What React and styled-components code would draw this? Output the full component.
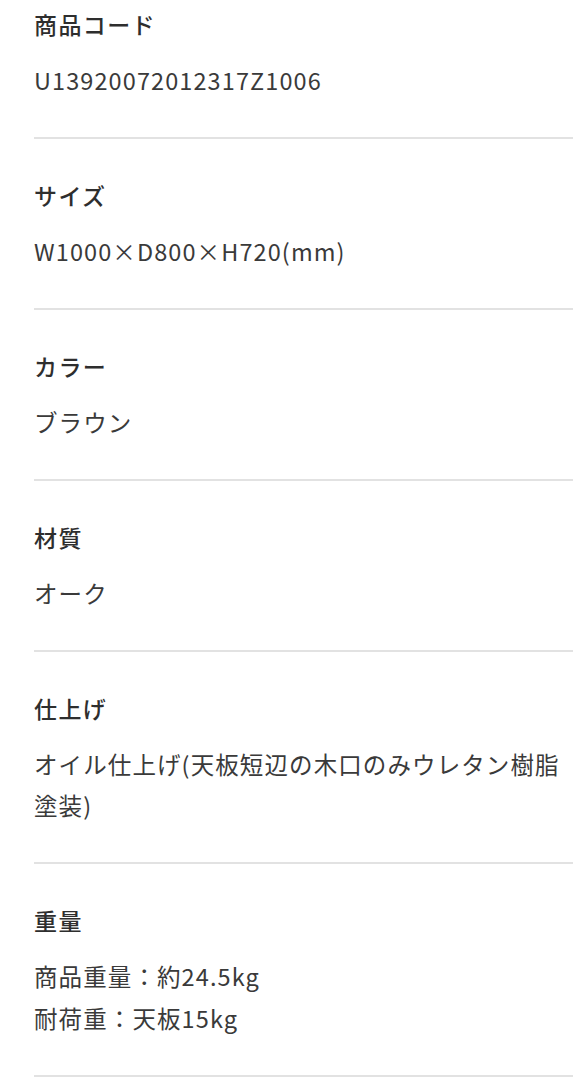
import React from "react";
import styled, { createGlobalStyle } from "styled-components";

const Global = createGlobalStyle`
  html, body { margin: 0; padding: 0; background: #fff; }
  body {
    font-family: "Noto Sans CJK JP", "Noto Sans", sans-serif;
    color: #333;
    -webkit-font-smoothing: antialiased;
  }
`;

const List = styled.dl`
  margin: 0 0 0 34px;
  padding: 0;
`;

const Item = styled.div`
  display: flex;
  flex-direction: column;
  gap: 14px;
  padding: 35px 0 36px;
  border-bottom: 2px solid #e2e2e2;
  &:first-child {
    padding-top: 3px;
  }
`;

const Term = styled.dt`
  margin: 0;
  font-size: 23px;
  line-height: 43px;
  font-weight: 500;
  letter-spacing: 1.4px;
  color: #2e2e2e;
`;

const Desc = styled.dd`
  margin: 0;
  font-size: 23.5px;
  line-height: ${(p) => p.$lh || 41}px;
  font-weight: 400;
  letter-spacing: 1.1px;
  color: #3a3a3a;
`;

const specs = [
  { term: "商品コード", lines: ["U13920072012317Z1006"] },
  { term: "サイズ", lines: ["W1000×D800×H720(mm)"] },
  { term: "カラー", lines: ["ブラウン"] },
  { term: "材質", lines: ["オーク"] },
  { term: "仕上げ", lines: ["オイル仕上げ(天板短辺の木口のみウレタン樹脂塗装)"] },
  { term: "重量", lines: ["商品重量：約24.5kg", "耐荷重：天板15kg"], lh: 41.5 },
];

export default function App() {
  return (
    <>
      <Global />
      <List>
        {specs.map((s) => (
          <Item key={s.term}>
            <Term>{s.term}</Term>
            <Desc $lh={s.lh}>
              {s.lines.map((l, i) => (
                <React.Fragment key={i}>
                  {i > 0 && <br />}
                  {l}
                </React.Fragment>
              ))}
            </Desc>
          </Item>
        ))}
      </List>
    </>
  );
}
